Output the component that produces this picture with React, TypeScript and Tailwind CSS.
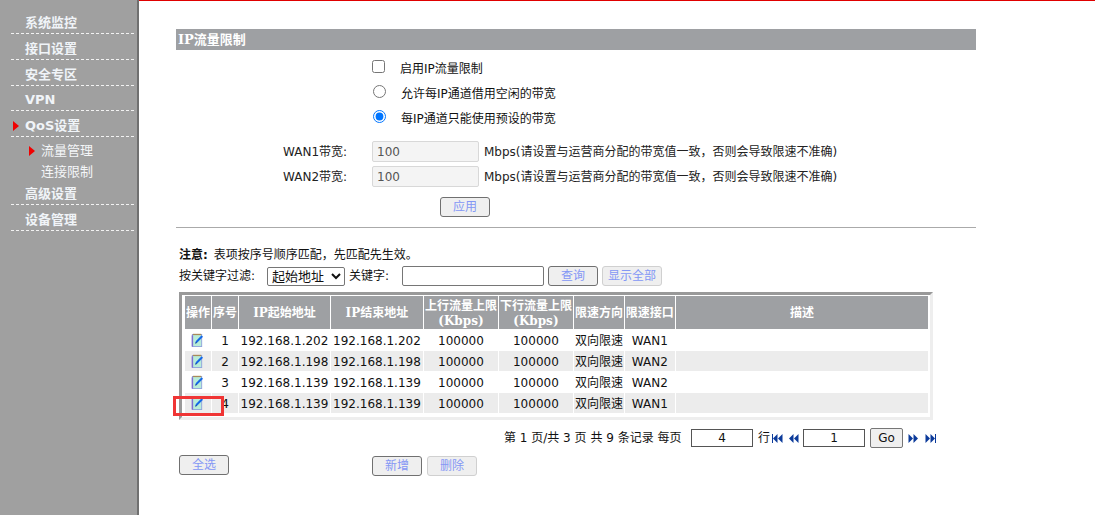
const SANS = "font-['DejaVu_Sans','Noto_Sans_CJK_SC',sans-serif]";

function EditIcon() {
  return (
    <svg width="13" height="15" viewBox="0 0 14 15" className="block">
      <rect x="1.5" y="1" width="10" height="13" fill="#b8ecd8" stroke="#8fa4dc" strokeWidth="1" />
      <path d="M2 1h9" stroke="#a8895a" strokeWidth="1.4" />
      <path d="M1.5 2v12" stroke="#7d6fd0" strokeWidth="1.6" />
      <path d="M4.5 10.5l.8-2.4L11.2 2l1.8 1.4-6.2 6.2z" fill="#1368e8" />
      <path d="M4.5 10.5l2-.8" stroke="#0b2f8a" strokeWidth="0.8" />
    </svg>
  );
}

function NavIcon({ dir, bar }: { dir: "l" | "r"; bar?: boolean }) {
  const paths = dir === "l"
    ? ["M5.5 0L1 4.5 5.5 9z", "M10.5 0L6 4.5 10.5 9z"]
    : ["M.5 0L5 4.5 .5 9z", "M5.5 0L10 4.5 5.5 9z"];
  return (
    <svg width="11" height="9" viewBox="0 0 11 9" className="block">
      {paths.map((d) => <path key={d} d={d} fill="#0b3a9a" />)}
      {bar && <rect x={dir === "l" ? 0 : 10} y="0" width="1" height="9" fill="#0b3a9a" />}
    </svg>
  );
}

function Arrow() {
  return (
    <svg width="6" height="10" viewBox="0 0 6 10" className="block">
      <path d="M0 0L6 5 0 10z" fill="#f00000" />
    </svg>
  );
}

function MenuItem({ label, h, active }: { label: string; h: string; active?: boolean }) {
  return (
    <div className={`${h} ml-[11px] mr-[3px] flex items-end border-b border-dashed border-[#f2f2f2] relative`}>
      {active && <span className="absolute left-[2px] bottom-[5px]"><Arrow /></span>}
      <span className="ml-[14px] text-[13px] leading-[20px] font-bold text-[#f0f4f8]">{label}</span>
    </div>
  );
}

function Btn({ label, w = "w-[50px]", light, className = "" }: { label: string; w?: string; light?: boolean; className?: string }) {
  return (
    <button className={`${w} h-[20px] rounded-[3px] border ${light ? "border-[#d0d0d0]" : "border-[#707070]"} bg-[#efefef] text-[12px] leading-[16px] text-[#8497f5] ${className}`}>
      {label}
    </button>
  );
}

const rows = [
  ["1", "192.168.1.202", "192.168.1.202", "WAN1"],
  ["2", "192.168.1.198", "192.168.1.198", "WAN2"],
  ["3", "192.168.1.139", "192.168.1.139", "WAN2"],
  ["4", "192.168.1.139", "192.168.1.139", "WAN1"],
];

const thBase = "bg-[#9ea0a3] text-white font-bold text-[12px] leading-[15px] p-0 pt-[2px] text-center whitespace-nowrap overflow-hidden font-['DejaVu_Serif','Noto_Sans_CJK_SC',serif]";

function BandRow({ name }: { name: string }) {
  return (
    <div className="flex h-[21px] items-center mb-[4px]">
      <span className="w-[196px] pl-[107px] text-[12px] text-[#222]">{name}带宽:</span>
      <input
        readOnly
        value="100"
        className="w-[107px] h-[21px] rounded-[2px] border border-[#d8d8d8] bg-[#f4f4f4] pl-[4px] text-[12px] text-[#555] outline-none"
      />
      <span className="ml-[5px] text-[12px] text-[#222]">Mbps(请设置与运营商分配的带宽值一致，否则会导致限速不准确)</span>
    </div>
  );
}

export default function App() {
  return (
    <div className={`${SANS} relative flex h-[515px] w-[1095px] overflow-hidden bg-white text-[12px] text-[#111]`}>
      <aside className="h-full w-[139px] shrink-0 border-r-2 border-[#707070] bg-[#a0a0a0] pt-[8px]">
        <MenuItem label="系统监控" h="h-[26px]" />
        <MenuItem label="接口设置" h="h-[26px]" />
        <MenuItem label="安全专区" h="h-[26px]" />
        <MenuItem label="VPN" h="h-[25px]" />
        <MenuItem label="QoS设置" h="h-[26px]" active />
        <div className="pt-[3px]">
          <div className="relative flex h-[21px] items-center pl-[41px] text-[13px] text-[#f4f6f8]">
            <span className="absolute left-[29px] top-[6px]"><Arrow /></span>
            流量管理
          </div>
          <div className="flex h-[21px] items-center pl-[41px] text-[13px] text-[#f4f6f8]">连接限制</div>
        </div>
        <MenuItem label="高级设置" h="h-[23px]" />
        <MenuItem label="设备管理" h="h-[26px]" />
      </aside>

      <main className="flex-1 border-t border-[#e00000] pl-[37px] pt-[28px]">
        <div className="h-[21px] w-[800px] bg-[#9ea0a3] pl-[2px] font-['DejaVu_Serif','Noto_Sans_CJK_SC',serif] text-[13px] font-bold leading-[22px] text-white">
          IP流量限制
        </div>

        <div className="pl-[196px] pt-[6px]">
          <label className="flex h-[25px] items-center">
            <input type="checkbox" className="m-0 mb-[4px] h-[13px] w-[13px]" />
            <span className="ml-[15px] text-[12px]">启用IP流量限制</span>
          </label>
          <label className="flex h-[25px] items-center">
            <input type="radio" name="bw" className="m-0 mb-[4px] ml-[1px] h-[13px] w-[13px]" />
            <span className="ml-[15px]">允许每IP通道借用空闲的带宽</span>
          </label>
          <label className="flex h-[25px] items-center">
            <input type="radio" name="bw" defaultChecked className="m-0 mb-[4px] ml-[1px] h-[13px] w-[13px]" />
            <span className="ml-[15px]">每IP通道只能使用预设的带宽</span>
          </label>
        </div>

        <div className="mt-[10px]">
          <BandRow name="WAN1" />
          <BandRow name="WAN2" />
        </div>

        <div className="pl-[264px] pt-[6px]">
          <Btn label="应用" className="block" />
        </div>

        <div className="mt-[10px] h-px w-[800px] bg-[#aaaaaa]" />

        <p className="mt-[19px] pl-[3px] text-[12px] leading-[16px]">
          <b className="mr-[2px]">注意:</b> 表项按序号顺序匹配，先匹配先生效。
        </p>

        <div className="mt-[3px] flex h-[20px] items-center pl-[3px]">
          <span className="w-[88px]">按关键字过滤:</span>
          <select className="h-[19px] w-[78px] rounded-[2px] border border-[#767676] bg-white text-[13px] leading-[15px]">
            <option>起始地址</option>
          </select>
          <span className="ml-[4px] w-[53px]">关键字:</span>
          <input className="h-[20px] w-[142px] rounded-[2px] border border-[#767676] bg-white" />
          <Btn label="查询" className="ml-[4px]" />
          <Btn label="显示全部" w="w-[60px]" light className="ml-[4px]" />
        </div>

        <div className="ml-[3px] mt-[6px] w-[754px] border-[3px] border-b-[#eeeeee] border-l-[#999999] border-r-[#eeeeee] border-t-[#999999] pb-[3px] pl-[2px] pr-[1px] pt-0">
          <table className="table-fixed border-separate border-spacing-[1px] text-[12px]">
            <colgroup>
              <col className="w-[26px]" />
              <col className="w-[26px]" />
              <col className="w-[91px]" />
              <col className="w-[92px]" />
              <col className="w-[74px]" />
              <col className="w-[74px]" />
              <col className="w-[50px]" />
              <col className="w-[50px]" />
              <col className="w-[253px]" />
            </colgroup>
            <thead>
              <tr className="h-[33px]">
                <th className={thBase}>操作</th>
                <th className={thBase}>序号</th>
                <th className={thBase}>IP起始地址</th>
                <th className={thBase}>IP结束地址</th>
                <th className={thBase}>上行流量上限<br />(Kbps)</th>
                <th className={thBase}>下行流量上限<br />(Kbps)</th>
                <th className={thBase}>限速方向</th>
                <th className={thBase}>限速接口</th>
                <th className={thBase}>描述</th>
              </tr>
            </thead>
            <tbody>
              {rows.map((r, i) => {
                const td = `${i % 2 ? "bg-[#ececec]" : "bg-white"} h-[20px] p-0 pt-[1px] text-center leading-[16px] whitespace-nowrap overflow-hidden`;
                return (
                  <tr key={r[0]}>
                    <td className={td}><span className="flex justify-center"><EditIcon /></span></td>
                    <td className={td}>{r[0]}</td>
                    <td className={td}>{r[1]}</td>
                    <td className={td}>{r[2]}</td>
                    <td className={td}>100000</td>
                    <td className={td}>100000</td>
                    <td className={td}>双向限速</td>
                    <td className={td}>{r[3]}</td>
                    <td className={td}></td>
                  </tr>
                );
              })}
            </tbody>
          </table>
        </div>

        <div className="mt-[7px] flex h-[22px] items-center pl-[328px]">
          <span className="w-[187px] whitespace-nowrap">第 1 页/共 3 页 共 9 条记录 每页</span>
          <input readOnly value="4" className="h-[18px] w-[62px] border border-[#555] text-center text-[12px]" />
          <span className="ml-[5px]">行</span>
          <span className="ml-[2px]"><NavIcon dir="l" bar /></span>
          <span className="ml-[5px]"><NavIcon dir="l" /></span>
          <input readOnly value="1" className="ml-[4px] h-[18px] w-[62px] border border-[#555] text-center text-[12px]" />
          <button className="ml-[5px] h-[20px] w-[33px] rounded-[2px] border border-[#767676] bg-[#efefef] text-[12px] leading-[16px]">Go</button>
          <span className="ml-[5px]"><NavIcon dir="r" /></span>
          <span className="ml-[6px]"><NavIcon dir="r" bar /></span>
        </div>

        <div className="mt-[6px] flex items-start pl-[3px]">
          <Btn label="全选" />
          <Btn label="新增" className="ml-[143px] mt-[1px]" />
          <Btn label="删除" light className="ml-[5px] mt-[1px]" />
        </div>
      </main>

      <div className="absolute left-[173px] top-[396px] h-[20px] w-[51px] border-[3px] border-[#f03535]" />
    </div>
  );
}
